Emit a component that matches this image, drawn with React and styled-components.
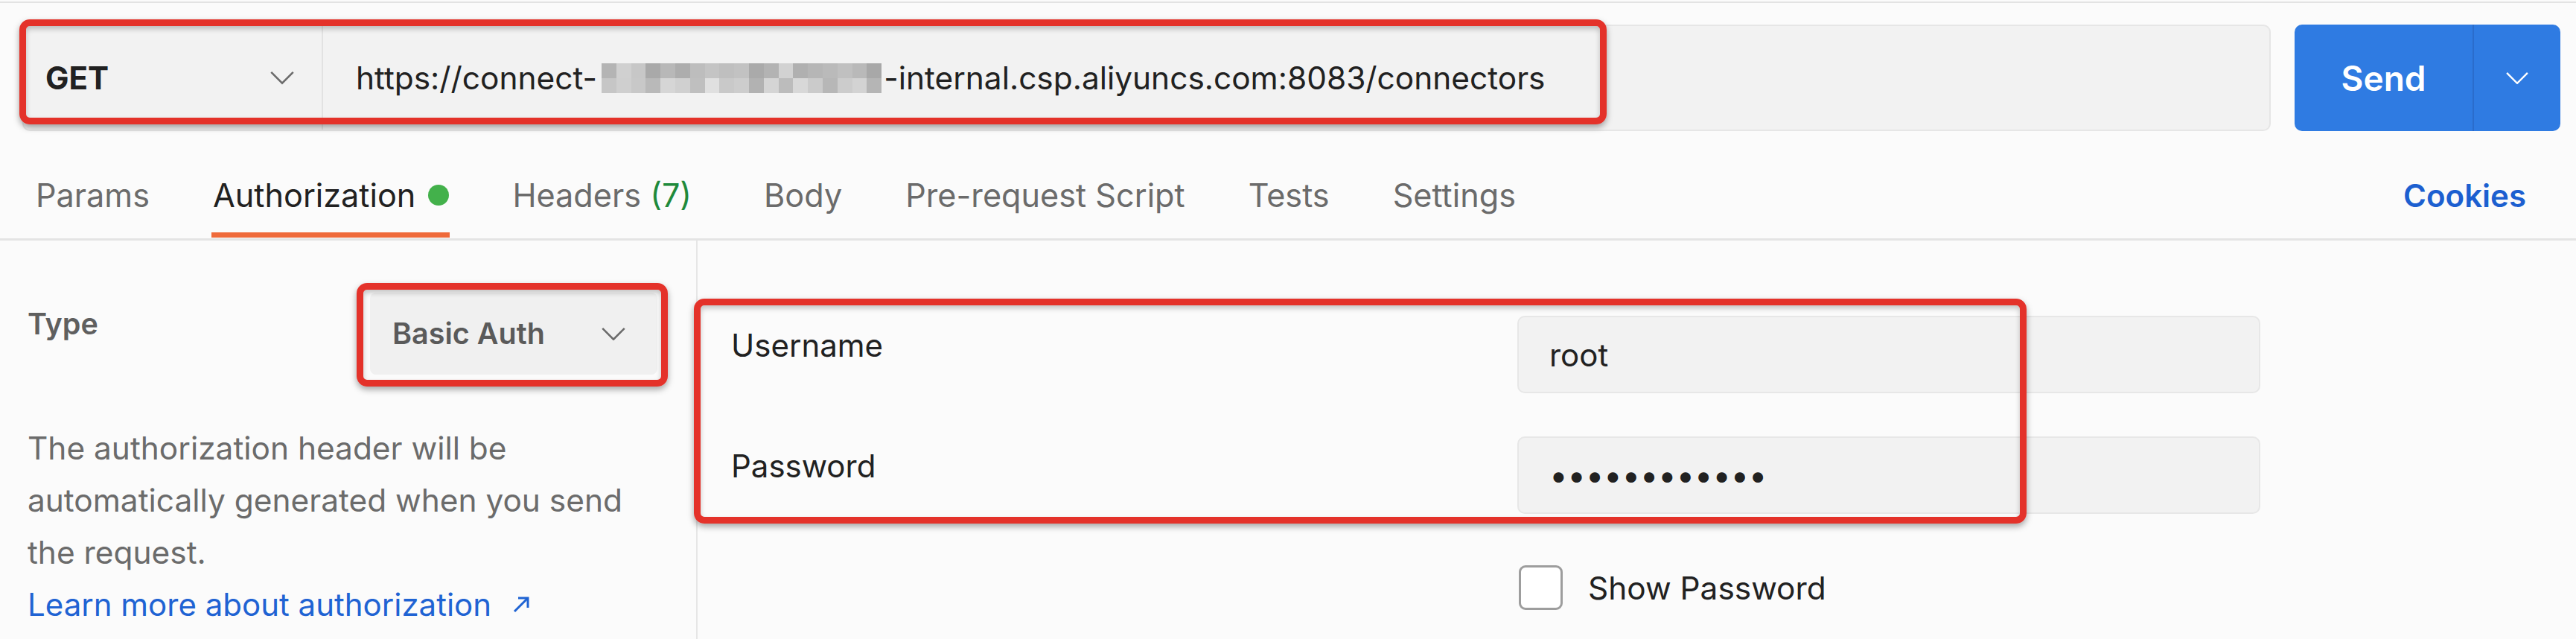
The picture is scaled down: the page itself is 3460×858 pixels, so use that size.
import React from "react";
import styled, { createGlobalStyle } from "styled-components";

const GlobalStyle = createGlobalStyle`
  * {
    box-sizing: border-box;
  }
  body {
    margin: 0;
    background: #fbfbfb;
    color: #212121;
    font-family: Inter, "Noto Sans", sans-serif;
  }
`;

const Page = styled.div`
  width: 3460px;
  height: 858px;
  overflow: hidden;
`;

const TopRule = styled.div`
  height: 2px;
  margin-top: 2px;
  background: #e3e3e3;
`;

const Annotation = styled.div`
  position: absolute;
  left: ${(p) => p.$left}px;
  top: ${(p) => p.$top}px;
  width: ${(p) => p.$width}px;
  height: ${(p) => p.$height}px;
  border: 9px solid #e4322a;
  border-radius: 14px;
  box-shadow: 0 4px 8px rgba(0, 0, 0, 0.35), inset 0 4px 7px rgba(0, 0, 0, 0.22);
  pointer-events: none;
`;

const RequestBar = styled.div`
  position: relative;
  display: flex;
  gap: 32px;
  height: 172px;
  padding: 29px 21px 0 30px;
`;

const UrlGroup = styled.div`
  flex: 1;
  display: flex;
  background: #f2f2f2;
  border: 2px solid #e6e6e6;
  border-radius: 10px;
`;

const Method = styled.div`
  flex: none;
  width: 402px;
  display: flex;
  align-items: center;
  justify-content: space-between;
  padding: 0 36px 0 29px;
  border-right: 2px solid #e2e2e2;
  font-size: 42px;
  font-weight: 700;
  color: #212121;
`;

const UrlText = styled.div`
  display: flex;
  align-items: center;
  padding-left: 44px;
  font-size: 42.4px;
  white-space: nowrap;
  color: #212121;
`;

const Mosaic = styled.span`
  display: inline-grid;
  grid-template-columns: repeat(19, 19.8px);
  grid-template-rows: 20px 20px;
  margin: 0 3px 0 6px;
`;

const MosaicCell = styled.span`
  background: ${(p) => p.$shade};
`;

const SendButton = styled.div`
  flex: none;
  width: 357px;
  display: flex;
  background: #2f7be2;
  border-radius: 10px;
  color: #ffffff;
`;

const SendLabel = styled.div`
  width: 241px;
  display: flex;
  align-items: center;
  justify-content: center;
  border-right: 2px solid #2a6ccc;
  font-size: 46px;
  font-weight: 600;
`;

const SendCaret = styled.div`
  flex: 1;
  display: flex;
  align-items: center;
  justify-content: center;
`;

const TabBar = styled.div`
  display: flex;
  gap: 85px;
  height: 147px;
  padding: 28px 67px 0 48px;
  border-bottom: 3px solid #e4e4e4;
`;

const Tab = styled.div`
  position: relative;
  display: flex;
  align-items: center;
  gap: 17px;
  margin-right: ${(p) => (p.$wide ? "12px" : "0")};
  font-size: 43.2px;
  color: ${(p) => (p.$active ? "#212121" : "#6b6b6b")};

  &::after {
    content: "";
    display: ${(p) => (p.$active ? "block" : "none")};
    position: absolute;
    left: -2px;
    right: -1px;
    bottom: 1px;
    height: 7px;
    background: #ef6a3a;
  }
`;

const StatusDot = styled.span`
  width: 28px;
  height: 28px;
  border-radius: 50%;
  background: #43b14b;
`;

const Count = styled.span`
  color: #1f8a3b;
`;

const Cookies = styled.div`
  margin-left: auto;
  display: flex;
  align-items: center;
  font-size: 42px;
  font-weight: 600;
  color: #1c5fd0;
`;

const Content = styled.div`
  display: flex;
  height: 535px;
`;

const LeftPanel = styled.div`
  flex: none;
  width: 937px;
  padding: 70px 0 0 37px;
  border-right: 2px solid #e6e6e6;
`;

const TypeRow = styled.div`
  display: flex;
  align-items: flex-start;
`;

const TypeLabel = styled.div`
  width: 460px;
  margin-top: 18px;
  font-size: 39.5px;
  line-height: 48px;
  font-weight: 600;
  color: #5f5f5f;
`;

const AuthSelect = styled.div`
  position: relative;
  width: 386px;
  height: 110px;
  display: flex;
  align-items: center;
  justify-content: space-between;
  padding: 0 42px 0 30px;
  background: #f0f0f0;
  border-radius: 8px;
  font-size: 39.5px;
  font-weight: 600;
  color: #5a5a5a;
`;

const Description = styled.p`
  margin: 64px 0 0;
  font-size: 42.4px;
  line-height: 70px;
  color: #6b6b6b;
`;

const LearnLink = styled.a`
  display: flex;
  align-items: center;
  gap: 28px;
  font-size: 42px;
  line-height: 70px;
  color: #1f63d3;
  text-decoration: none;
`;

const RightPanel = styled.div`
  position: relative;
  flex: 1;
  padding: 101px 0 0 45px;
`;

const FieldGrid = styled.div`
  display: grid;
  grid-template-columns: 1056px 998px;
  row-gap: 58px;
`;

const FieldLabel = styled.div`
  padding-top: 16px;
  font-size: 42px;
  line-height: 48px;
  color: #212121;
`;

const TextField = styled.div`
  height: 104px;
  display: flex;
  align-items: center;
  padding-left: 41px;
  background: #f2f2f2;
  border: 2px solid #e7e7e7;
  border-radius: 10px;
  font-size: ${(p) => (p.$secret ? "44px" : "42px")};
  letter-spacing: ${(p) => (p.$secret ? "-0.4px" : "0")};
  color: #212121;
`;

const CheckRow = styled.div`
  display: flex;
  align-items: center;
  gap: 34px;
  margin: 69px 0 0 1058px;
  font-size: 42.4px;
  color: #212121;
`;

const Checkbox = styled.span`
  width: 59px;
  height: 60px;
  background: #ffffff;
  border: 3px solid #9d9d9d;
  border-radius: 9px;
`;

const Chevron = ({ color = "#6b6b6b", width = 34 }) => (
  <svg width={width} height={width * 0.55} viewBox="0 0 34 19" fill="none">
    <polyline points="2,2 17,17 32,2" stroke={color} strokeWidth="2.6" />
  </svg>
);

const ExternalArrow = () => (
  <svg width="24" height="24" viewBox="0 0 24 24" fill="none" stroke="#1f63d3" strokeWidth="3">
    <path d="M3 21 21 3" />
    <path d="M8 3h13v13" />
  </svg>
);

const mosaicShades = [
  "#b4b4b4", "#d0d0d0", "#c7c7c7", "#a9a9a9", "#b8b8b8", "#adadad", "#bdbdbd", "#c4c4c4",
  "#bfbfbf", "#c2c2c2", "#aaaaaa", "#b3b3b3", "#d2d2d2", "#b0b0b0", "#b6b6b6", "#bababa",
  "#c0c0c0", "#b9b9b9", "#a8a8a8",
  "#c6c6c6", "#cfcfcf", "#c8c8c8", "#b9b9b9", "#d6d6d6", "#d0d0d0", "#bfbfbf", "#e0e0e0",
  "#c9c9c9", "#cdcdcd", "#b2b2b2", "#d5d5d5", "#bcbcbc", "#d8d8d8", "#cbcbcb", "#b7b7b7",
  "#cccccc", "#d3d3d3", "#b5b5b5",
];

const tabs = [
  { label: "Params" },
  { label: "Authorization", active: true, dot: true },
  { label: "Headers", count: "(7)" },
  { label: "Body" },
  { label: "Pre-request Script" },
  { label: "Tests" },
  { label: "Settings" },
];

function App() {
  return (
    <Page>
      <GlobalStyle />
      <TopRule />
      <RequestBar>
        <UrlGroup>
          <Method>
            GET
            <Chevron />
          </Method>
          <UrlText>
            https://connect-
            <Mosaic>
              {mosaicShades.map((shade, i) => (
                <MosaicCell key={i} $shade={shade} />
              ))}
            </Mosaic>
            -internal.csp.aliyuncs.com:8083/connectors
          </UrlText>
        </UrlGroup>
        <SendButton>
          <SendLabel>Send</SendLabel>
          <SendCaret>
            <Chevron color="#ffffff" width={32} />
          </SendCaret>
        </SendButton>
        <Annotation $left={26} $top={22} $width={2132} $height={141} />
      </RequestBar>

      <TabBar>
        {tabs.map((t) => (
          <Tab key={t.label} $active={t.active} $wide={!!t.count}>
            <span>
              {t.label}
              {t.count && <Count> {t.count}</Count>}
            </span>
            {t.dot && <StatusDot />}
          </Tab>
        ))}
        <Cookies>Cookies</Cookies>
      </TabBar>

      <Content>
        <LeftPanel>
          <TypeRow>
            <TypeLabel>Type</TypeLabel>
            <AuthSelect>
              Basic Auth
              <Chevron />
              <Annotation $left={-18} $top={-13} $width={418} $height={139} />
            </AuthSelect>
          </TypeRow>
          <Description>
            The authorization header will be
            <br />
            automatically generated when you send
            <br />
            the request.
          </Description>
          <LearnLink href="#">
            Learn more about authorization
            <ExternalArrow />
          </LearnLink>
        </LeftPanel>

        <RightPanel>
          <FieldGrid>
            <FieldLabel>Username</FieldLabel>
            <TextField>root</TextField>
            <FieldLabel>Password</FieldLabel>
            <TextField $secret>••••••••••••</TextField>
          </FieldGrid>
          <CheckRow>
            <Checkbox />
            Show Password
          </CheckRow>
          <Annotation $left={-5} $top={78} $width={1790} $height={302} />
        </RightPanel>
      </Content>
    </Page>
  );
}

export default App;
